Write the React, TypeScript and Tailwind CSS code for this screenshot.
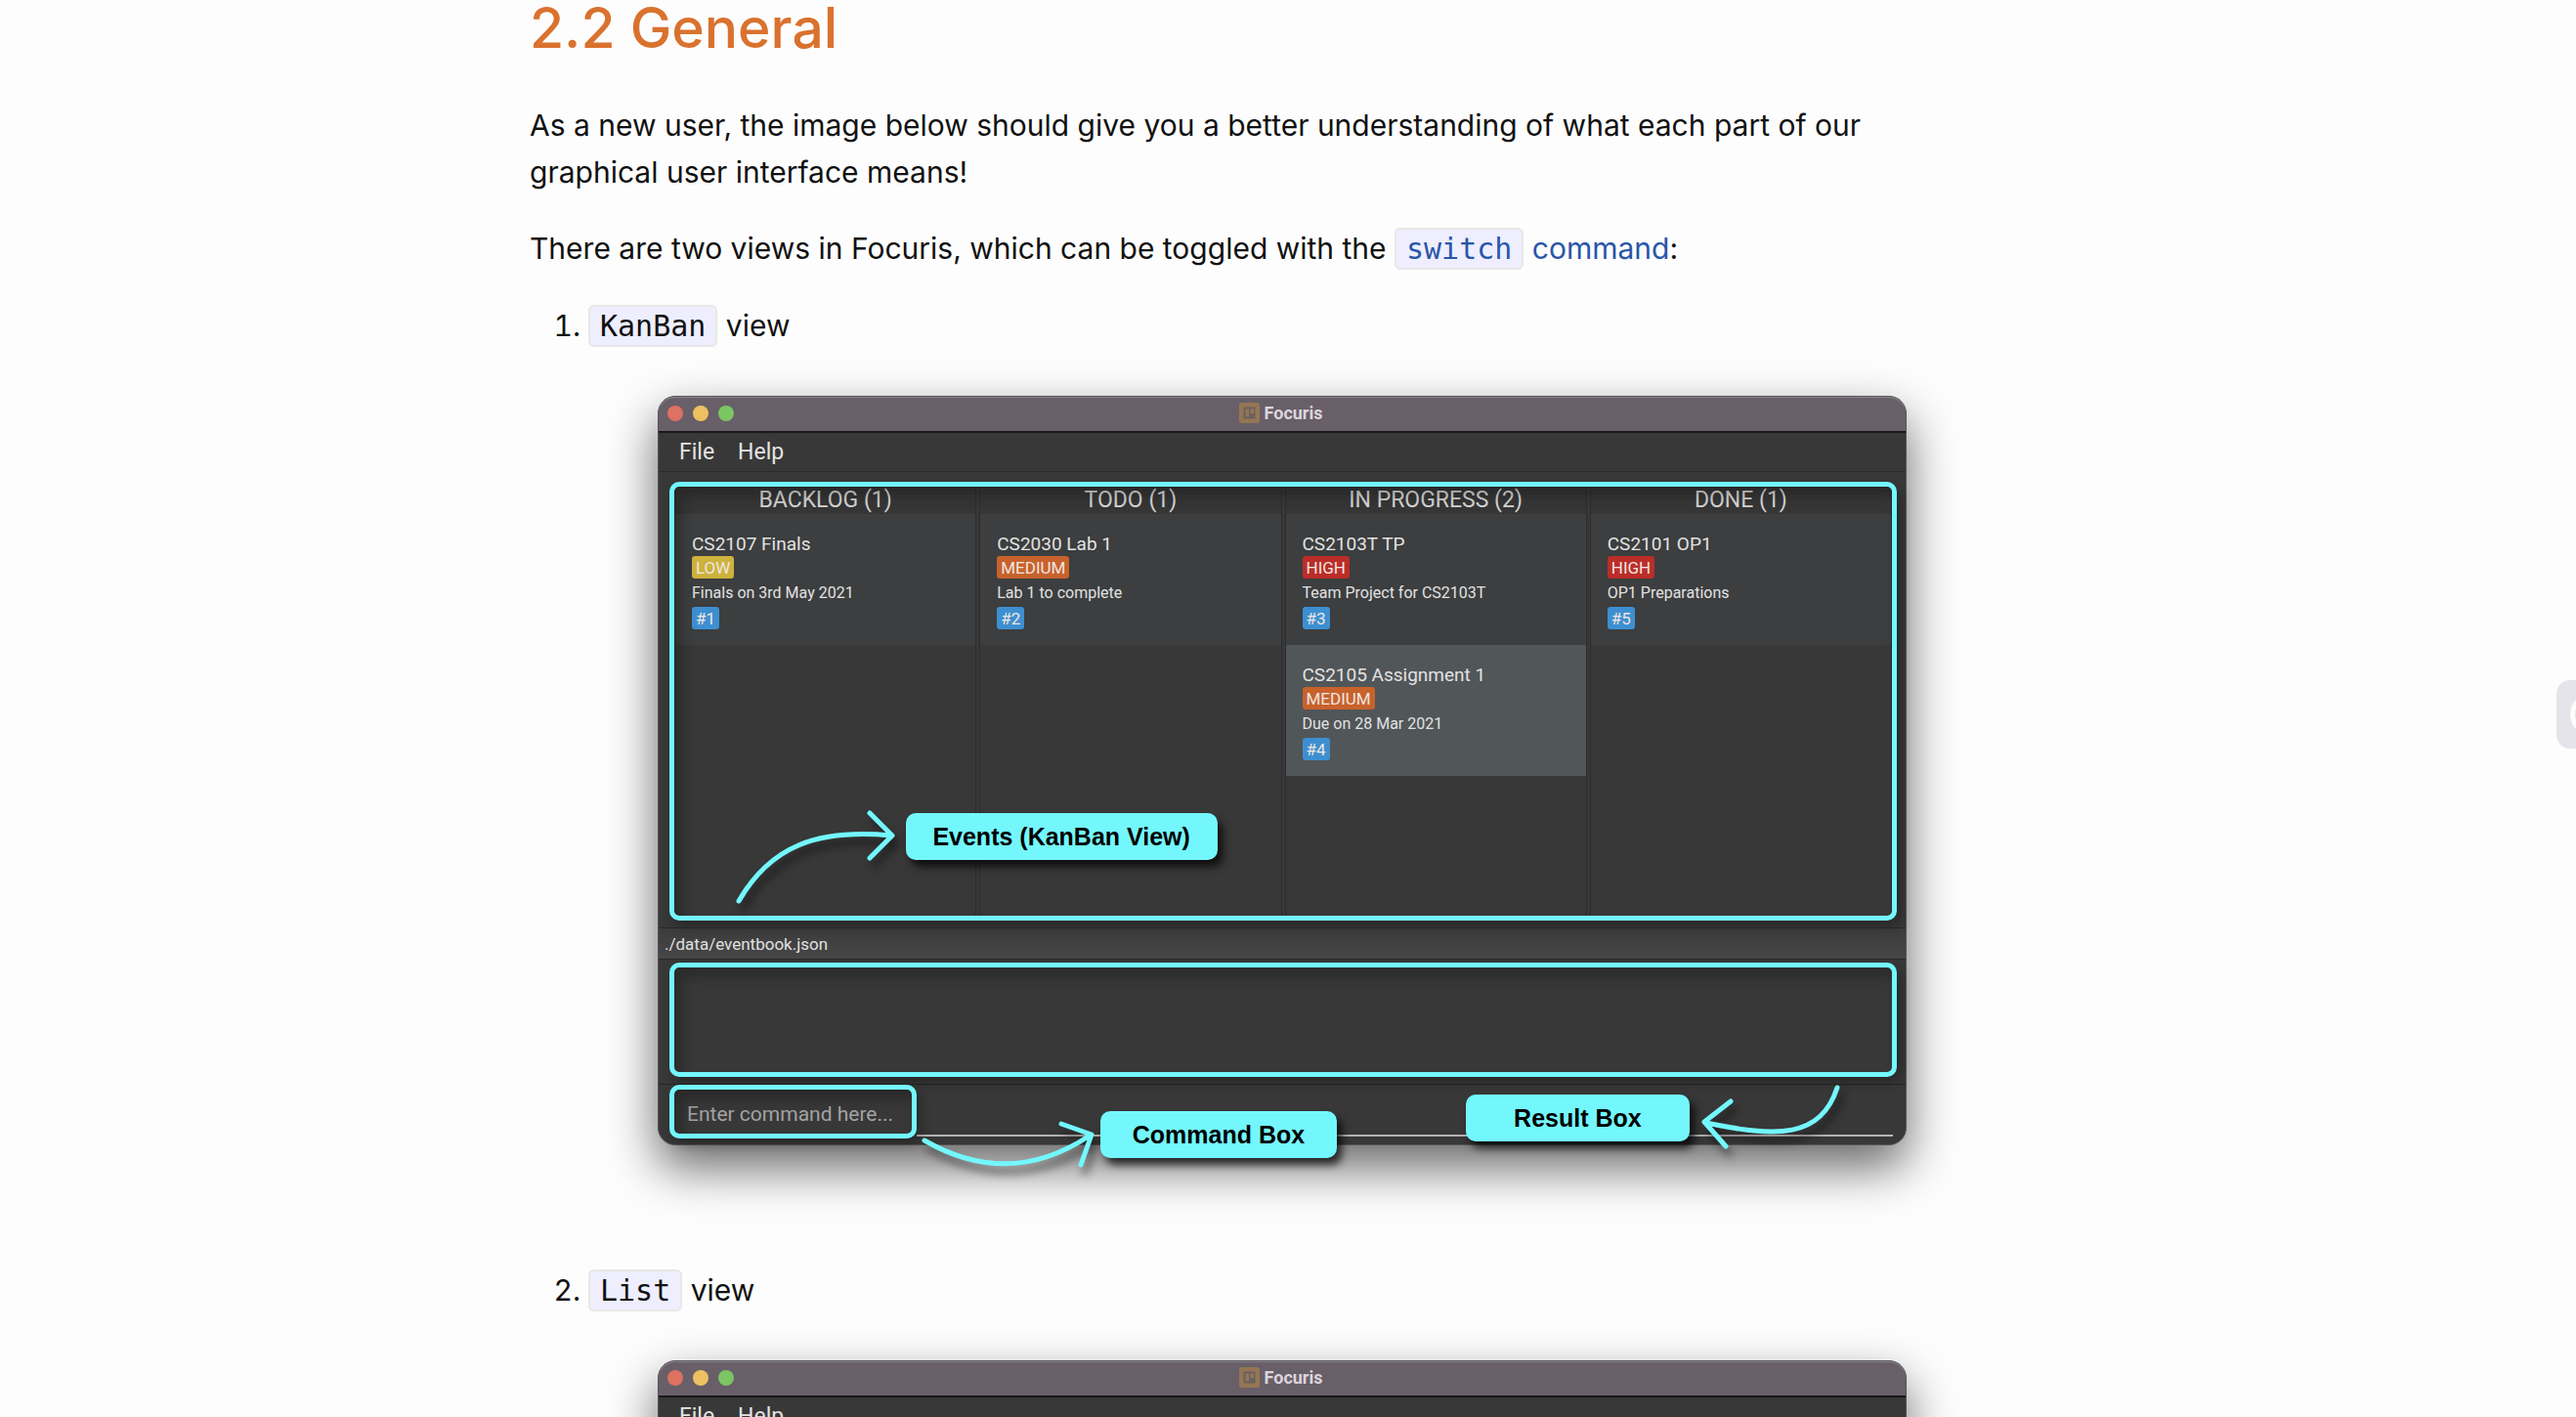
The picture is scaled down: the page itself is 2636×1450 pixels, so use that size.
import type { ReactNode } from "react";

type Priority = "LOW" | "MEDIUM" | "HIGH";
type Task = { title: string; priority: Priority; note: string; id: number; selected?: boolean };

const columns: { name: string; tasks: Task[] }[] = [
  { name: "BACKLOG", tasks: [{ title: "CS2107 Finals", priority: "LOW", note: "Finals on 3rd May 2021", id: 1 }] },
  { name: "TODO", tasks: [{ title: "CS2030 Lab 1", priority: "MEDIUM", note: "Lab 1 to complete", id: 2 }] },
  {
    name: "IN PROGRESS",
    tasks: [
      { title: "CS2103T TP", priority: "HIGH", note: "Team Project for CS2103T", id: 3 },
      { title: "CS2105 Assignment 1", priority: "MEDIUM", note: "Due on 28 Mar 2021", id: 4, selected: true },
    ],
  },
  { name: "DONE", tasks: [{ title: "CS2101 OP1", priority: "HIGH", note: "OP1 Preparations", id: 5 }] },
];

const priorityColor: Record<Priority, string> = {
  LOW: "bg-[#cdb23c]",
  MEDIUM: "bg-[#c8622c]",
  HIGH: "bg-[#bb2d28]",
};

function Code({ children }: { children: ReactNode }) {
  return (
    <code className="rounded-md border-2 border-[#e8e8e8] bg-[#eeeeff] px-[10px] py-[2px] font-['DejaVu_Sans_Mono',monospace] text-[30px]">
      {children}
    </code>
  );
}

function Chip({ color, children }: { color: string; children: ReactNode }) {
  return (
    <span className={`flex h-[23px] w-fit items-center rounded-[3px] px-1 text-[17px] text-[#f0e6e0] ${color}`}>
      {children}
    </span>
  );
}

function Card({ task }: { task: Task }) {
  return (
    <article
      className={`px-[17px] pt-[18px] pb-4 text-[#e2e2e2] ${task.selected ? "bg-[#515658]" : "bg-[#3c3e3f]"}`}
    >
      <h3 className="text-[19px] leading-[25px]">{task.title}</h3>
      <Chip color={priorityColor[task.priority]}>{task.priority}</Chip>
      <p className="text-[16px] leading-[29px]">{task.note}</p>
      <Chip color="bg-[#3d8fd1]">#{task.id}</Chip>
    </article>
  );
}

/* Cyan outline drawn over a region of the app window. */
function Outline() {
  return (
    <div className="pointer-events-none absolute inset-0 rounded-[10px] border-[5px] border-[#73f7fd] shadow-[4px_6px_12px_rgba(0,0,0,0.3),inset_8px_10px_14px_rgba(0,0,0,0.25)]" />
  );
}

function Callout({ className, children }: { className: string; children: ReactNode }) {
  return (
    <div
      className={`absolute flex h-[48px] items-center justify-center rounded-[10px] bg-[#73f7fd] font-['Liberation_Sans',Arial,sans-serif] text-[25px] font-bold text-black shadow-[5px_7px_8px_rgba(0,0,0,0.75)] ${className}`}
    >
      {children}
    </div>
  );
}

function AppIcon() {
  return (
    <svg viewBox="0 0 21 21" className="size-[21px]" aria-hidden="true">
      <rect width="21" height="21" rx="3" fill="#957654" />
      <rect x="4.5" y="4.5" width="12" height="12" rx="1" fill="#6b6060" />
      <rect x="6.5" y="6.5" width="3.5" height="8" fill="#957654" />
      <rect x="11.5" y="6.5" width="3.5" height="4.5" fill="#957654" />
    </svg>
  );
}

function AppWindow({ children }: { children?: ReactNode }) {
  return (
    <div className="relative mx-auto w-[90%] rounded-[18px] border border-[#565457] bg-[#383838] font-[Roboto,sans-serif] shadow-[0_22px_50px_rgba(0,0,0,0.6)]">
      <header className="flex h-[37px] items-center rounded-t-[17px] border-b-2 border-[#18171a] bg-[#685f68] pr-3 pb-[2px] pl-[9px] text-[18px] font-bold text-[#dcd5dc] shadow-[inset_0_1px_0_#8b858c]">
        <div className="flex flex-1 gap-[10px]">
          <span className="size-4 rounded-full bg-[#dd7162]" />
          <span className="size-4 rounded-full bg-[#edc161]" />
          <span className="size-4 rounded-full bg-[#7bc563]" />
        </div>
        <div className="flex items-center gap-[5px]">
          <AppIcon />
          Focuris
        </div>
        <div className="flex-1" />
      </header>
      <nav className="flex h-[40px] items-center gap-[24px] border-b border-[#2c2c2c] pl-[21px] text-[23px] text-[#e4e4e4]">
        <button type="button">File</button>
        <button type="button">Help</button>
      </nav>
      {children}
    </div>
  );
}

function KanbanWindow() {
  return (
    <AppWindow>
      <section className="relative mt-[10px] mr-[9px] mb-[7px] ml-[11px] grid min-h-[449px] grid-cols-4 gap-[3px] p-[5px]">
        {columns.map((column) => (
          <div key={column.name} className="border-x border-[#2d2d2d]">
            <h2 className="bg-[#363636] text-center text-[23px] leading-[28px] text-[#d6d6d6]">
              {column.name} ({column.tasks.length})
            </h2>
            {column.tasks.map((task) => (
              <Card key={task.id} task={task} />
            ))}
          </div>
        ))}
        <Outline />
      </section>

      <div className="h-[33px] border-y border-[#2a2a2a] bg-linear-to-b from-[#3c3c3c] to-[#464646] pl-[6px] text-[17px] leading-[33px] text-[#e0e0e0]">
        ./data/eventbook.json
      </div>

      <div className="relative mt-[3px] mr-[9px] mb-[7px] ml-[11px] h-[117px]">
        <Outline />
      </div>

      <div className="flex items-end border-t border-[#262626] pr-[13px] pb-[6px] pl-[11px]">
        <div className="relative h-[55px] w-[253px]">
          <input
            type="text"
            aria-label="Command"
            placeholder="Enter command here..."
            className="h-full w-full bg-transparent pt-[5px] pl-[18px] text-[21px] text-[#e0e0e0] outline-none placeholder:text-[#a3a3a3]"
          />
          <Outline />
        </div>
        <div className="mb-[2px] h-[2px] flex-1 bg-[#b5b3b5]" />
      </div>

      <svg
        viewBox="0 0 1278 766"
        className="pointer-events-none absolute -top-px -left-px w-[calc(100%+2px)] overflow-visible drop-shadow-[4px_8px_4px_rgba(0,0,0,0.5)]"
        fill="none"
        stroke="#73f7fd"
        strokeWidth="5"
        strokeLinecap="round"
        strokeLinejoin="round"
        aria-hidden="true"
      >
        <path d="M83 517C116 460 164 443 239 450M217 427L240 450L217 473" />
        <path d="M273 762Q360 812 442 757M413 745L444 756L433 787" />
        <path d="M1207 708C1190 760 1146 759 1073 744M1098 722L1071 743L1093 768" />
      </svg>
      <Callout className="top-[426px] left-[19.8%] w-[25%]">Events (KanBan View)</Callout>
      <Callout className="top-[731px] left-[35.4%] w-[19%]">Command Box</Callout>
      <Callout className="top-[714px] left-[64.7%] w-[18%]">Result Box</Callout>
    </AppWindow>
  );
}

export default function App() {
  return (
    <div className="h-screen overflow-hidden bg-[#fdfdfd] font-[Inter,sans-serif] text-[30px] leading-[48px] text-[#111111]">
      <main className="mx-auto max-w-[1552px] pr-[72px]">
        <h2 className="mb-[46px] text-[57px] leading-[58px] font-medium text-[#d9722e]">2.2 General</h2>
        <p className="mb-[30px]">
          As a new user, the image below should give you a better understanding of what each part of our
          <br />
          graphical user interface means!
        </p>
        <p className="mb-[30px]">
          There are two views in Focuris, which can be toggled with the{" "}
          <a href="#switch" className="text-[#2a56a8]">
            <Code>switch</Code> command
          </a>
          :
        </p>
        <ol className="list-decimal pl-[60px]">
          <li className="mb-[124px]">
            <p className="mb-[47px]">
              <Code>KanBan</Code> view
            </p>
            <KanbanWindow />
          </li>
          <li>
            <p className="mb-[47px]">
              <Code>List</Code> view
            </p>
            <AppWindow />
          </li>
        </ol>
      </main>

      <button
        type="button"
        aria-label="Open side panel"
        className="fixed top-[48%] right-0 h-[70px] w-5 overflow-hidden rounded-l-[14px] bg-[#e4e4ea]"
      >
        <svg viewBox="0 0 20 70" className="h-full w-full" aria-hidden="true">
          <circle cx="36" cy="35" r="19" fill="#fdfdfd" stroke="#fdfdfd" strokeWidth="6" />
          <circle cx="36" cy="35" r="17" fill="#e4e4ea" />
        </svg>
      </button>
    </div>
  );
}
